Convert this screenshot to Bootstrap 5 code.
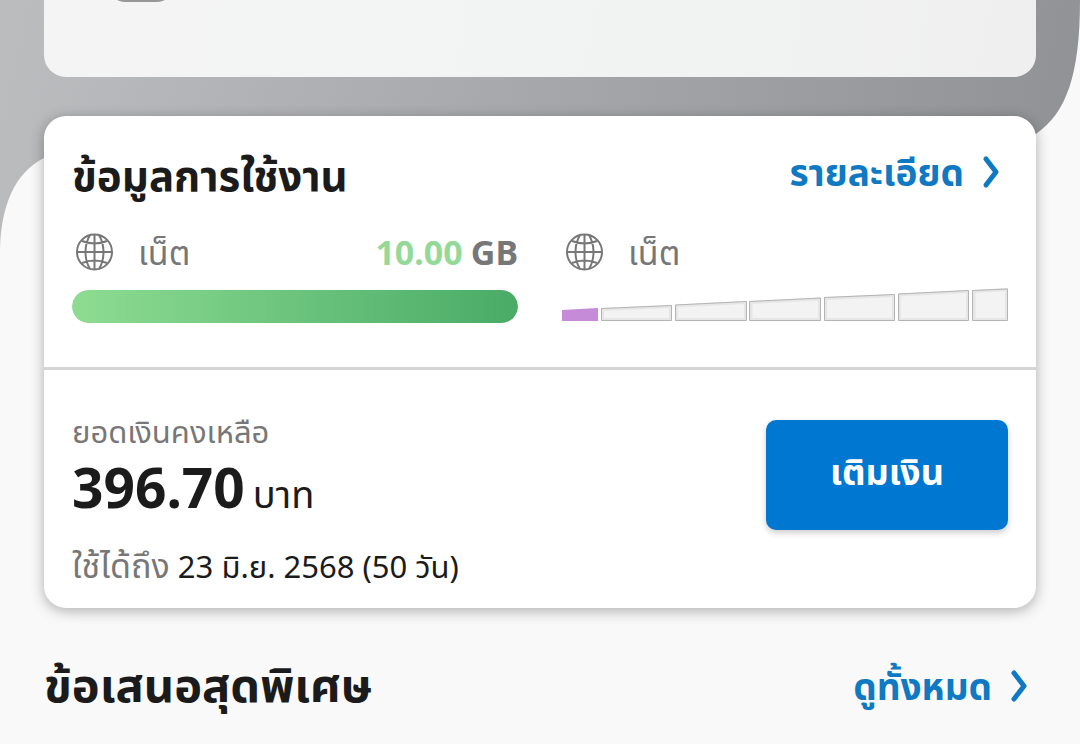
<!DOCTYPE html>
<html lang="th">
<head>
<meta charset="utf-8">
<meta name="viewport" content="width=device-width, initial-scale=1">
<title>ข้อมูลการใช้งาน</title>
<link rel="stylesheet" href="https://cdn.jsdelivr.net/npm/bootstrap@5.3.0/dist/css/bootstrap.min.css">
<style>
  body { background: #f9f9f9; color: #1b1b1b; font-family: "Noto Sans", "Noto Sans Thai", "Open Sans", sans-serif; overflow-x: hidden; }
  .backdrop { top: 0; left: 0; height: 260px; z-index: -1; }
  .page-wrap { padding: 0 44px 10px; }
  .promo-card { height: 77px; border-radius: 0 0 22px 22px; background: linear-gradient(100deg, #f4f4f4, #f2f4f3 50%, #efefef); }
  .promo-tab { top: -38px; left: 62px; width: 70px; height: 40px; border-radius: 20px; background: #97979a; }
  .usage-card { margin-top: 39px; border-radius: 22px; background: #fff; box-shadow: 0 3px 14px rgba(0,0,0,.3); }
  .usage-top { padding: 31px 28px 44px; border-bottom: 3px solid #d5d5d5; }
  .usage-bottom { padding: 37px 28px 18px; }
  .title-text { font-size: 42px; line-height: 56px; font-weight: 700; }
  .offer-row { margin-top: 44px; }
  .offer-text { font-size: 47px; line-height: 64px; font-weight: 700; }
  .more-link { color: #1079c3; font-size: 37px; line-height: 50px; font-weight: 700; text-decoration: none; }
  .muted-text { color: #777; }
  .quota-list { display: grid; grid-template-columns: 1fr 1fr; column-gap: 44px; margin-top: 25px; }
  .quota-name { font-size: 34px; line-height: 48px; }
  .label-text { font-size: 31px; line-height: 48px; }
  .expiry-text { font-size: 31px; line-height: 48px; }
  .expiry-label { font-size: 34px; }
  .amount-text { font-size: 34px; line-height: 46px; font-weight: 700; }
  .amount-value { color: #94d998; }
  .quota-bar { height: 33px; margin-top: 14px; border-radius: 17px; background: #eee; }
  .quota-bar .progress-bar { border-radius: 17px; background: linear-gradient(90deg, #8edc92, #49ab67); }
  .speed-steps { height: 33px; margin-top: 12px; }
  .balance-value { font-size: 55px; line-height: 64px; font-weight: 700; }
  .balance-unit { font-size: 38px; font-weight: 400; }
  .topup-btn { width: 242px; height: 110px; margin-top: 13px; padding-bottom: 12px; border-radius: 10px; background: #0078d1; color: #fff; font-size: 36px; font-weight: 700; box-shadow: 0 3px 6px rgba(0,0,0,.2); }
  .topup-btn:hover { background: #006abb; color: #fff; }
</style>
</head>
<body>
<svg class="backdrop position-absolute w-100" viewBox="0 0 1080 260" preserveAspectRatio="none" aria-hidden="true">
  <defs><linearGradient id="steel" gradientUnits="userSpaceOnUse" x1="0" y1="100" x2="1010" y2="320"><stop offset="0" stop-color="#bbbcbe"/><stop offset="1" stop-color="#929397"/></linearGradient></defs>
  <path fill="url(#steel)" d="M0 0H1080C1080 76 1066 113 1036 134L980 150H90C66 150 58 151 44 158C14 173 1 207 0 250Z"/>
</svg>
<div class="page-wrap">
  <section class="promo-card position-relative overflow-hidden"><span class="promo-tab position-absolute"></span></section>

  <main class="usage-card">
    <section class="usage-top">
      <div class="d-flex justify-content-between align-items-start">
        <h1 class="title-text m-0">ข้อมูลการใช้งาน</h1>
        <a href="#" class="more-link d-flex align-items-center gap-3 pe-1">รายละเอียด
          <svg width="24" height="36" viewBox="0 0 24 36" fill="none" stroke="currentColor" stroke-width="5" stroke-linecap="round" stroke-linejoin="round" aria-hidden="true"><path d="M6 5L16 18L6 31"/></svg></a>
      </div>
      <div class="quota-list">
        <div>
          <div class="d-flex align-items-center">
            <svg class="ms-1 me-4" width="38" height="38" viewBox="0 0 38 38" fill="none" stroke="#777" stroke-width="2" aria-hidden="true"><g id="globe"><circle cx="18.5" cy="19" r="17.5"/><path d="M18.5 1.5V36.5M1 19H36M14 2C8 12 8 26 14 36M23 2C29 12 29 26 23 36M6 8Q18.5 13 31 8M6 30Q18.5 25 31 30"/></g></svg>
            <span class="quota-name muted-text">เน็ต</span>
            <span class="amount-text d-flex gap-2 ms-auto muted-text"><span class="amount-value">10.00</span><span>GB</span></span>
          </div>
          <div class="progress quota-bar" role="progressbar" aria-label="เน็ต" aria-valuenow="100" aria-valuemin="0" aria-valuemax="100"><div class="progress-bar w-100"></div></div>
        </div>
        <div>
          <div class="d-flex align-items-center">
            <svg class="ms-1 me-4" width="38" height="38" viewBox="0 0 38 38" fill="none" stroke="#777" stroke-width="2" aria-hidden="true"><use href="#globe"/></svg>
            <span class="quota-name muted-text">เน็ต</span>
          </div>
          <svg class="speed-steps d-block w-100" viewBox="0 0 446 33" preserveAspectRatio="none" role="img" aria-label="1/7">
            <path fill="#c58ad8" d="M0 22L36 20V33H0Z"/>
            <g fill="#f3f3f3" stroke="#e6e6e6" stroke-width="3"><path d="M40.500 21.500L108.500 18.500V31.500H40.500Z"/><path d="M114.500 18L183.500 14.500V31.500H114.500Z"/><path d="M189 14.500L257.500 11V31.500H189Z"/><path d="M263.500 10.500L331.500 7.500V31.500H263.500Z"/><path d="M337.500 7L405.500 3.500V31.500H337.500Z"/><path d="M412 3.500L444.500 1.500V31.500H412Z"/></g>
            <g fill="none" stroke="#b4b4b4" stroke-width="1"><path d="M39.500 20.500L109.500 17.500V32.500H39.500Z"/><path d="M113.500 17L184.500 13.500V32.500H113.500Z"/><path d="M187.500 13.500L258.500 10V32.500H187.500Z"/><path d="M262.500 9.500L332.500 6.500V32.500H262.500Z"/><path d="M336.500 6L406.500 2.500V32.500H336.500Z"/><path d="M410.500 2.500L445.500 1V32.500H410.500Z"/></g>
          </svg>
        </div>
      </div>
    </section>
    <section class="usage-bottom d-flex justify-content-between align-items-start">
      <div>
        <div class="label-text muted-text">ยอดเงินคงเหลือ</div>
        <div class="balance-value d-flex align-items-baseline gap-2"><span>396.70</span><span class="balance-unit">บาท</span></div>
        <div class="expiry-text mt-3"><span class="expiry-label muted-text">ใช้ได้ถึง</span> 23 มิ.ย. 2568 (50 วัน)</div>
      </div>
      <button type="button" class="btn topup-btn border-0">เติมเงิน</button>
    </section>
  </main>
  <section class="offer-row d-flex justify-content-between align-items-center">
    <h2 class="offer-text m-0">ข้อเสนอสุดพิเศษ</h2>
    <a href="#" class="more-link d-flex align-items-center gap-3 pt-1 pe-1">ดูทั้งหมด
      <svg width="24" height="36" viewBox="0 0 24 36" fill="none" stroke="currentColor" stroke-width="5" stroke-linecap="round" stroke-linejoin="round" aria-hidden="true"><path d="M6 5L16 18L6 31"/></svg></a>
  </section>
</div>
<script src="https://cdn.jsdelivr.net/npm/bootstrap@5.3.0/dist/js/bootstrap.bundle.min.js"></script>
</body>
</html>
